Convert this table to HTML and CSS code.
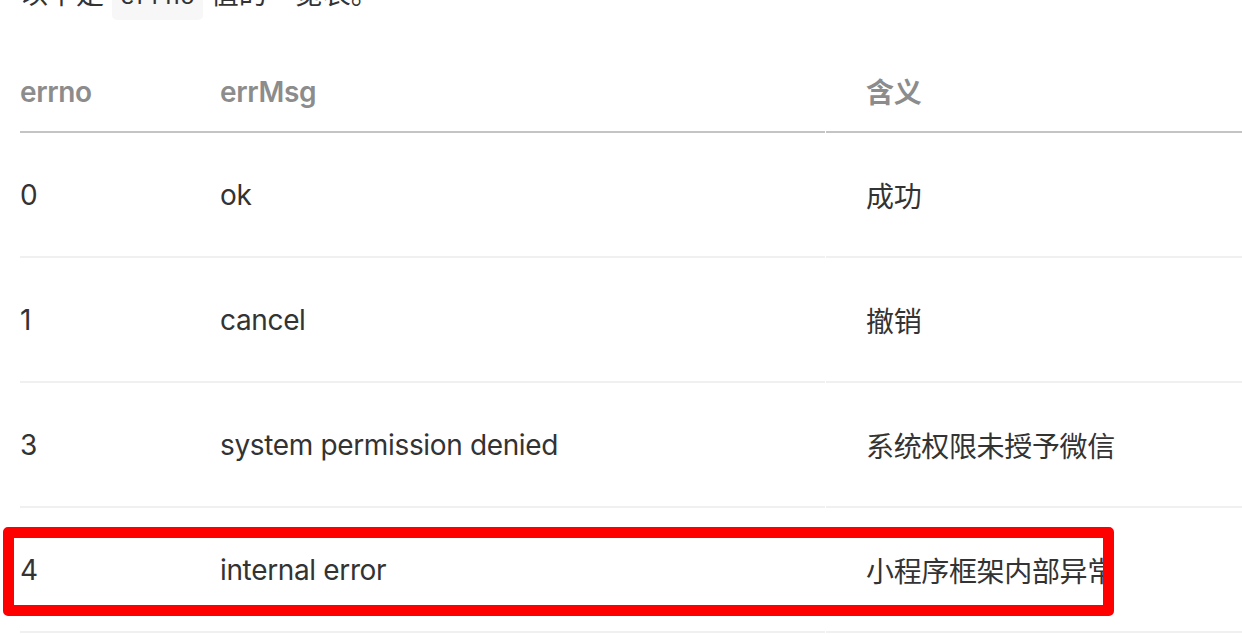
FILE: index.html
```html
<!DOCTYPE html>
<html lang="zh-CN">
<head>
<meta charset="utf-8">
<title>errno</title>
<link rel="stylesheet" href="styles.css">
</head>
<body>
<div class="page">
  <p class="intro">以下是 <code class="code">errno</code> 值的一览表。</p>
  <div class="table">
    <div class="row head">
      <div class="cell c1">errno</div>
      <div class="cell c2">errMsg</div>
      <div class="cell c3">含义</div>
    </div>
    <div class="row">
      <div class="cell c1">0</div>
      <div class="cell c2">ok</div>
      <div class="cell c3">成功</div>
    </div>
    <div class="row">
      <div class="cell c1">1</div>
      <div class="cell c2">cancel</div>
      <div class="cell c3">撤销</div>
    </div>
    <div class="row">
      <div class="cell c1">3</div>
      <div class="cell c2">system permission denied</div>
      <div class="cell c3">系统权限未授予微信</div>
    </div>
    <div class="row">
      <div class="cell c1">4</div>
      <div class="cell c2">internal error</div>
      <div class="cell c3">小程序框架内部异常</div>
    </div>
  </div>
</div>
<div class="highlight"></div>
</body>
</html>
```

FILE: styles.css
```css
html, body {
  margin: 0;
  padding: 0;
  background: #ffffff;
  overflow: hidden;
}
body {
  font-family: Inter, "Noto Sans CJK SC", sans-serif;
  font-size: 28px;
  color: #333333;
}
.page {
  padding-left: 20px;
  width: 1222px;
}
.intro {
  margin: -26px 0 0 0;
  line-height: 40px;
  height: 40px;
  color: #333333;
}
.code {
  font-family: "Liberation Mono", monospace;
  font-size: 25px;
  background: #f7f7f7;
  border-radius: 5px;
  padding: 2px 8px 8px 8px;
  color: #333333;
}
.table {
  margin-top: 39px;
  display: flex;
  flex-direction: column;
}
.row {
  display: grid;
  grid-template-columns: 200px 605px 1fr;
}
.cell {
  height: 123px;
  display: flex;
  align-items: center;
  border-bottom: 2px solid #f0f0f0;
  white-space: nowrap;
  overflow: hidden;
  letter-spacing: -0.35px;
}
.c3 {
  margin-left: 1px;
  padding-left: 40px;
}
.head .cell {
  height: 78px;
  border-bottom-color: #c4c4c4;
  color: #8c8c8c;
  font-weight: 600;
}
.head .c3 {
  height: 75px;
  padding-bottom: 3px;
}
.highlight {
  position: absolute;
  left: 3px;
  top: 527px;
  width: 1089px;
  height: 67px;
  border: 11px solid #ff0000;
  border-radius: 5px;
}
```
